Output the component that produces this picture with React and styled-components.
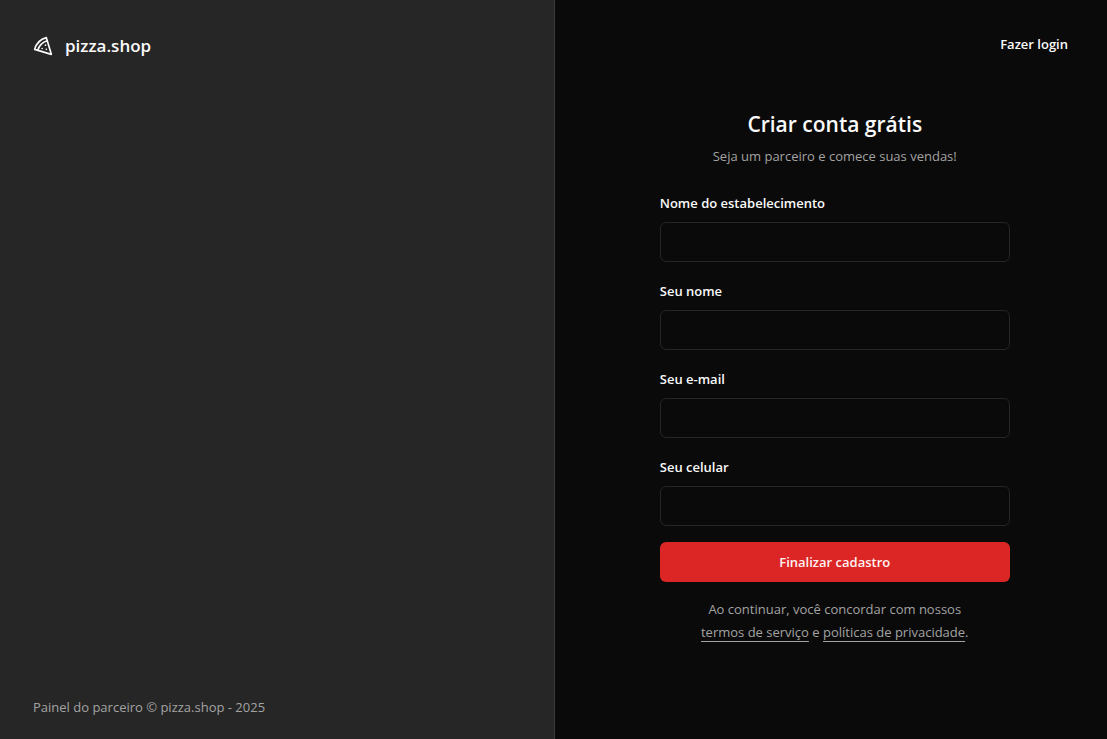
import React from "react";
import styled, { createGlobalStyle } from "styled-components";

const GlobalStyle = createGlobalStyle`
  *, *::before, *::after { box-sizing: border-box; }
  body {
    margin: 0;
    background: #0a0a0a;
    color: #fafafa;
    font-family: "Segoe UI", "Open Sans", "Noto Sans", sans-serif;
    font-size: 13px;
    line-height: 20px;
  }
`;

const Layout = styled.div`
  display: grid;
  grid-template-columns: calc(50% + 1px) 1fr;
  min-height: 100vh;
`;

const BrandPanel = styled.aside`
  display: flex;
  flex-direction: column;
  justify-content: space-between;
  padding: 32px 33px 22px;
  border-right: 1px solid #383838;
  background: #262626;
  color: #a3a3a3;
`;

const Brand = styled.div`
  display: flex;
  align-items: center;
  gap: 12px;
  color: #fafafa;
  font-size: 17px;
  font-weight: 600;
  line-height: 28px;
`;

const Footer = styled.footer`
  font-size: 13px;
`;

const SignUpPanel = styled.main`
  display: flex;
  flex-direction: column;
  padding: 24px 24px 32px 32px;
`;

const LoginLink = styled.a`
  align-self: flex-end;
  padding: 10px 15px;
  color: #fafafa;
  font-weight: 600;
  text-decoration: none;
`;

const Content = styled.div`
  display: flex;
  flex-direction: column;
  align-self: center;
  gap: 24px;
  width: 350px;
  max-width: 100%;
  margin-top: 44px;
`;

const Intro = styled.header`
  display: flex;
  flex-direction: column;
  gap: 6px;
  text-align: center;
`;

const Title = styled.h1`
  margin: 0;
  font-size: 21px;
  font-weight: 600;
  line-height: 32px;
`;

const Subtitle = styled.p`
  margin: 0;
  color: #a3a3a3;
`;

const Form = styled.form`
  display: flex;
  flex-direction: column;
  gap: 16px;
`;

const Field = styled.div`
  display: flex;
  flex-direction: column;
  gap: 6px;
`;

const Label = styled.label`
  font-weight: 600;
  line-height: 26px;
`;

const Input = styled.input`
  width: 100%;
  height: 40px;
  padding: 8px 12px;
  border: 1px solid #262626;
  border-radius: 6px;
  background: #0a0a0a;
  color: #fafafa;
  font: inherit;
`;

const SubmitButton = styled.button`
  height: 40px;
  border: 0;
  border-radius: 6px;
  background: #dc2626;
  color: #fef2f2;
  font: inherit;
  font-weight: 600;
  cursor: pointer;
`;

const Terms = styled.p`
  margin: 0;
  padding: 0 32px;
  color: #a3a3a3;
  line-height: 23px;
  text-align: center;
`;

const TermsLink = styled.a`
  color: inherit;
  text-decoration: underline;
  text-underline-offset: 4px;
`;

const PizzaIcon = () => (
  <svg
    width="20"
    height="20"
    viewBox="0 0 24 24"
    fill="none"
    stroke="currentColor"
    strokeWidth="2"
    strokeLinecap="round"
    strokeLinejoin="round"
    aria-hidden="true"
  >
    <path d="M15 11h.01" />
    <path d="M11 15h.01" />
    <path d="M16 16h.01" />
    <path d="m2 16 20 6-6-20A20 20 0 0 0 2 16" />
    <path d="M5.71 17.11a17.04 17.04 0 0 1 11.4-11.4" />
  </svg>
);

const fields = [
  { id: "restaurantName", label: "Nome do estabelecimento", type: "text" },
  { id: "managerName", label: "Seu nome", type: "text" },
  { id: "email", label: "Seu e-mail", type: "email" },
  { id: "phone", label: "Seu celular", type: "tel" },
];

export default function App() {
  return (
    <>
      <GlobalStyle />
      <Layout>
        <BrandPanel>
          <Brand>
            <PizzaIcon />
            <span>pizza.shop</span>
          </Brand>
          <Footer>Painel do parceiro © pizza.shop - 2025</Footer>
        </BrandPanel>
        <SignUpPanel>
          <LoginLink href="#sign-in">Fazer login</LoginLink>
          <Content>
            <Intro>
              <Title>Criar conta grátis</Title>
              <Subtitle>Seja um parceiro e comece suas vendas!</Subtitle>
            </Intro>
            <Form onSubmit={(event) => event.preventDefault()}>
              {fields.map(({ id, label, type }) => (
                <Field key={id}>
                  <Label htmlFor={id}>{label}</Label>
                  <Input id={id} type={type} />
                </Field>
              ))}
              <SubmitButton type="submit">Finalizar cadastro</SubmitButton>
              <Terms>
                Ao continuar, você concordar com nossos{" "}
                <TermsLink href="#terms">termos de serviço</TermsLink> e{" "}
                <TermsLink href="#privacy">políticas de privacidade</TermsLink>.
              </Terms>
            </Form>
          </Content>
        </SignUpPanel>
      </Layout>
    </>
  );
}
